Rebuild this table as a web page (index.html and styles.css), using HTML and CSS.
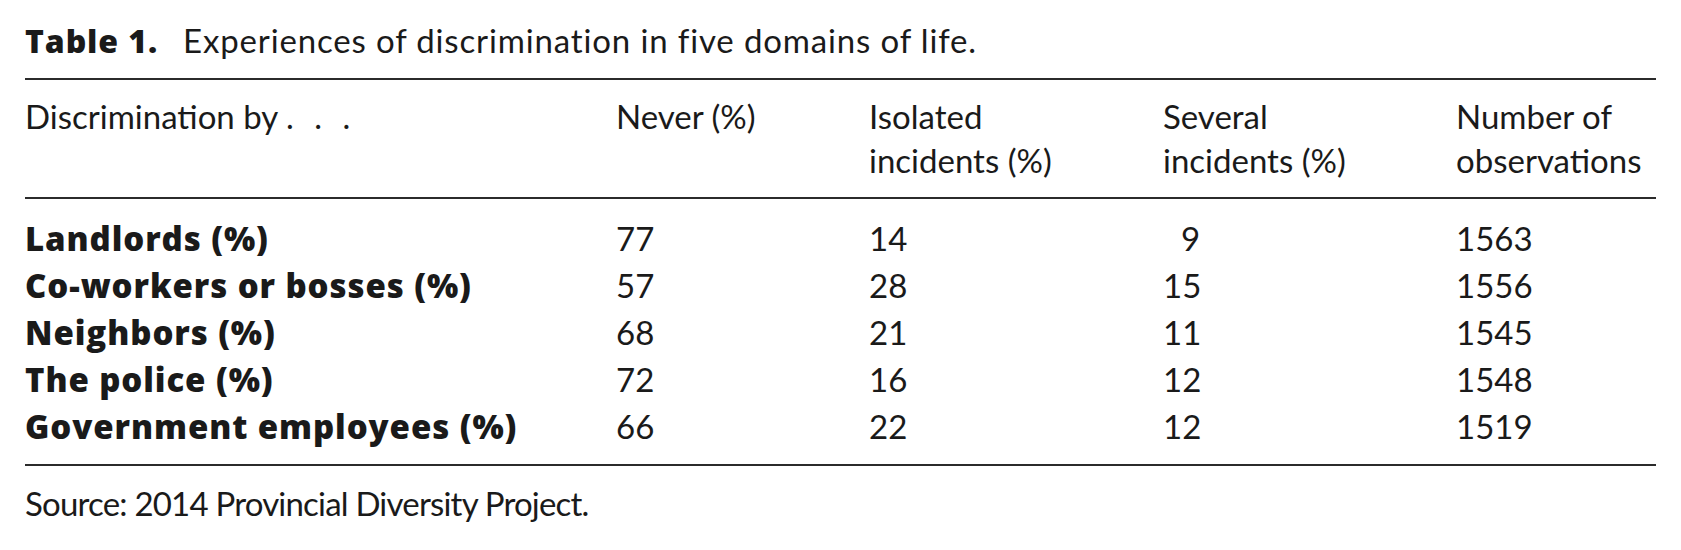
FILE: index.html
```html
<!DOCTYPE html>
<html lang="en">
<head>
<meta charset="utf-8">
<title>Table 1</title>
<link rel="stylesheet" href="styles.css">
</head>
<body>
<div class="page">
  <p class="caption"><b class="label">Table 1.</b>&nbsp;&nbsp;<span class="title">Experiences of discrimination in five domains of life.</span></p>
  <table class="data">
    <colgroup>
      <col class="c1"><col class="c2"><col class="c3"><col class="c4"><col class="c5">
    </colgroup>
    <thead>
      <tr>
        <th>Discrimination by <span class="dots">. . .</span></th>
        <th>Never (%)</th>
        <th>Isolated<br>incidents (%)</th>
        <th>Several<br>incidents (%)</th>
        <th>Number of<br>observations</th>
      </tr>
    </thead>
    <tbody>
      <tr><td class="rowname">Landlords (%)</td><td>77</td><td>14</td><td><span class="pad">9</span></td><td>1563</td></tr>
      <tr><td class="rowname">Co-workers or bosses (%)</td><td>57</td><td>28</td><td>15</td><td>1556</td></tr>
      <tr><td class="rowname">Neighbors (%)</td><td>68</td><td>21</td><td>11</td><td>1545</td></tr>
      <tr><td class="rowname">The police (%)</td><td>72</td><td>16</td><td>12</td><td>1548</td></tr>
      <tr><td class="rowname">Government employees (%)</td><td>66</td><td>22</td><td>12</td><td>1519</td></tr>
    </tbody>
  </table>
  <p class="source">Source: 2014 Provincial Diversity Project.</p>
</div>
</body>
</html>
```

FILE: styles.css
```css
html, body {
  margin: 0;
  padding: 0;
  background: #ffffff;
}

body {
  font-family: "Lato", "Noto Sans", sans-serif;
  color: #1a1a1a;
  font-size: 33px;
}

.page {
  width: 1631px;
  padding: 20px 0 0 25px;
}

.caption {
  margin: 0 0 17px 0;
  line-height: 40px;
  white-space: nowrap;
}

.caption .label {
  font-family: "Open Sans", "Lato", sans-serif;
  font-size: 32px;
  font-weight: 800;
  letter-spacing: 0.9px;
  margin-right: 8px;
}

.caption .title {
  letter-spacing: 0.85px;
}

.data {
  width: 1631px;
  table-layout: fixed;
  border-collapse: collapse;
  border-top: 2px solid #2b2b2b;
  border-bottom: 2px solid #2b2b2b;
}

.c1 { width: 591px; }
.c2 { width: 253px; }
.c3 { width: 294px; }
.c4 { width: 293px; }
.c5 { width: 200px; }

.data th {
  font-weight: 400;
  text-align: left;
  vertical-align: top;
  padding: 0;
  line-height: 44px;
  white-space: nowrap;
}

.dots {
  letter-spacing: 6px;
}

.data thead tr {
  border-bottom: 2px solid #2b2b2b;
}

.data thead th {
  padding-top: 14px;
  padding-bottom: 15px;
}

.data td {
  padding: 0;
  line-height: 46px;
  text-align: left;
  vertical-align: baseline;
  white-space: nowrap;
}

.data tbody tr:first-child td {
  padding-top: 16px;
}

.data tbody tr:last-child td {
  padding-bottom: 14px;
}

.data .rowname {
  font-family: "Open Sans", "Lato", sans-serif;
  font-size: 33px;
  font-weight: 800;
  letter-spacing: 0.9px;
}

.pad {
  padding-left: 18px;
}

.source {
  margin: 17px 0 0 0;
  line-height: 40px;
  letter-spacing: -0.8px;
}
```
